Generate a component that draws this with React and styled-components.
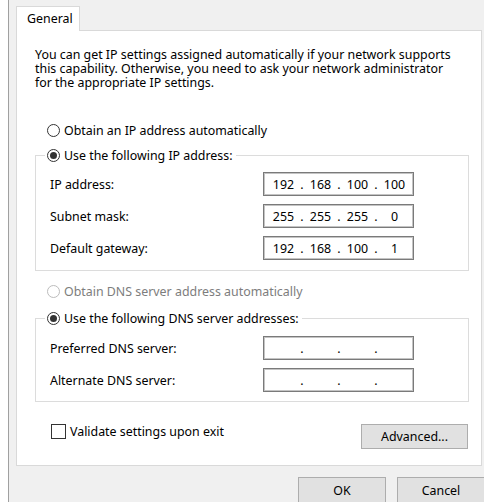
import styled, { createGlobalStyle } from "styled-components";

const GlobalStyle = createGlobalStyle`
  * { box-sizing: border-box; }
  html, body {
    margin: 0;
    padding: 0;
    background: #ffffff;
  }
  body {
    font-family: "Noto Sans", "Open Sans", sans-serif;
    font-size: 12.4px;
    color: #000000;
  }
`;

const ipRows = [
  { label: "IP address:", value: ["192", "168", "100", "100"] },
  { label: "Subnet mask:", value: ["255", "255", "255", "0"] },
  { label: "Default gateway:", value: ["192", "168", "100", "1"] },
];

const dnsRows = [
  { label: "Preferred DNS server:", value: ["", "", "", ""] },
  { label: "Alternate DNS server:", value: ["", "", "", ""] },
];

const IpBox = ({ value }) => (
  <StyledIpBox>
    {value.map((part, i) => (
      <span key={i} style={{ display: "contents" }}>
        <Octet>{part}</Octet>
        {i < 3 && <Dot>.</Dot>}
      </span>
    ))}
  </StyledIpBox>
);

const FieldRows = ({ rows }) => (
  <Rows>
    {rows.map((r) => (
      <Row key={r.label}>
        <RowLabel>{r.label}</RowLabel>
        <IpBox value={r.value} />
      </Row>
    ))}
  </Rows>
);

export default function App() {
  return (
    <>
      <GlobalStyle />
      <Screen>
        <Window>
          <TitleEdge />
          <Body>
            <Tab>General</Tab>
            <Panel>
              <Intro>
                <IntroLine>You can get IP settings assigned automatically if your network supports</IntroLine>
                <IntroLine>this capability. Otherwise, you need to ask your network administrator</IntroLine>
                <IntroLine>for the appropriate IP settings.</IntroLine>
              </Intro>

              <RadioRow $top={32}>
                <Radio />
                Obtain an IP address automatically
              </RadioRow>

              <Group $top={10} $bottom={10}>
                <Legend>
                  <Radio $checked />
                  Use the following IP address:
                </Legend>
                <FieldRows rows={ipRows} />
              </Group>

              <RadioRow $top={12} $disabled>
                <Radio $disabled />
                Obtain DNS server address automatically
              </RadioRow>

              <Group $top={12} $bottom={9} $pad={10}>
                <Legend>
                  <Radio $checked />
                  Use the following DNS server addresses:
                </Legend>
                <FieldRows rows={dnsRows} />
              </Group>

              <BottomRow>
                <CheckLabel>
                  <CheckBox />
                  Validate settings upon exit
                </CheckLabel>
                <Button $w={107} $h={25}>Advanced...</Button>
              </BottomRow>
            </Panel>

            <Footer>
              <Button $w={88} $h={26}>OK</Button>
              <Button $w={88} $h={26}>Cancel</Button>
            </Footer>
          </Body>
        </Window>
      </Screen>
    </>
  );
}

const Screen = styled.div`
  display: flex;
  width: 484px;
  height: 502px;
  overflow: hidden;
  padding-left: 8px;
  background: #ffffff;
`;

const Window = styled.div`
  flex: 1;
  display: flex;
  flex-direction: column;
  background: #f0f0f0;
  border-left: 1px solid #a0a0a0;
`;

const TitleEdge = styled.div`
  width: 333px;
  height: 3px;
  margin-left: -1px;
  background: #c3c3c3;
`;

const Body = styled.div`
  padding: 6px 2px 0 7px;
`;

const Tab = styled.div`
  position: relative;
  z-index: 1;
  width: 64px;
  height: 25px;
  margin-bottom: -1px;
  padding-left: 10px;
  line-height: 23px;
  background: #ffffff;
  border: 1px solid #d9d9d9;
  border-bottom: none;
`;

const Panel = styled.div`
  height: 436px;
  padding: 0 12px 0 18px;
  background: #ffffff;
  border: 1px solid #d9d9d9;
`;

const Intro = styled.div`
  display: flex;
  flex-direction: column;
  margin-top: 17px;
`;

const IntroLine = styled.span`
  height: 14px;
  line-height: 14px;
  white-space: nowrap;
`;

const RadioRow = styled.div`
  display: flex;
  align-items: center;
  gap: 4px;
  height: 16px;
  margin-top: ${(p) => p.$top}px;
  padding-left: 12px;
  color: ${(p) => (p.$disabled ? "#7d7d7d" : "#000000")};
`;

const Radio = styled.span`
  position: relative;
  flex: none;
  width: 13px;
  height: 13px;
  border-radius: 50%;
  border: 1px solid ${(p) => (p.$disabled ? "#bcbcbc" : "#333333")};
  background: #ffffff;

  &::after {
    content: "";
    display: ${(p) => (p.$checked ? "block" : "none")};
    position: absolute;
    left: 2px;
    top: 2px;
    width: 7px;
    height: 7px;
    border-radius: 50%;
    background: #333333;
  }
`;

const Group = styled.fieldset`
  margin: ${(p) => p.$top}px 0 0 0;
  padding: ${(p) => p.$pad || 9}px 0 ${(p) => p.$bottom}px 9px;
  border: 1px solid #dcdcdc;
  min-width: 0;
`;

const Legend = styled.legend`
  display: flex;
  align-items: center;
  gap: 4px;
  height: 15px;
  padding: 0 3px 0 2px;
`;

const Rows = styled.div`
  display: flex;
  flex-direction: column;
  gap: 8px;
`;

const Row = styled.div`
  display: grid;
  grid-template-columns: 213px 151px;
  align-items: center;
  padding-left: 5px;
`;

const RowLabel = styled.span`
  white-space: nowrap;
`;

const StyledIpBox = styled.div`
  display: flex;
  align-items: center;
  height: 24px;
  padding-left: 5px;
  border: 1px solid #7a7a7a;
  box-shadow: inset 0 0 0 1px #c4c4c4;
  background: #ffffff;
`;

const Octet = styled.span`
  width: 29px;
  text-align: center;
`;

const Dot = styled.span`
  width: 8px;
  text-align: center;
`;

const BottomRow = styled.div`
  display: flex;
  justify-content: space-between;
  align-items: flex-start;
  margin-top: 22px;
  padding: 0 1px 0 16px;
`;

const CheckLabel = styled.label`
  display: flex;
  align-items: center;
  gap: 4px;
  height: 15px;
`;

const CheckBox = styled.span`
  width: 15px;
  height: 15px;
  border: 1px solid #333333;
  background: #ffffff;
`;

const Button = styled.button`
  flex: none;
  width: ${(p) => p.$w}px;
  height: ${(p) => p.$h}px;
  padding: 0;
  font-family: inherit;
  font-size: 12.4px;
  color: #000000;
  background: #e1e1e1;
  border: 1px solid #adadad;
  border-radius: 0;
`;

const Footer = styled.div`
  display: flex;
  justify-content: flex-end;
  gap: 11px;
  margin: 11px -3px 0 0;
`;
